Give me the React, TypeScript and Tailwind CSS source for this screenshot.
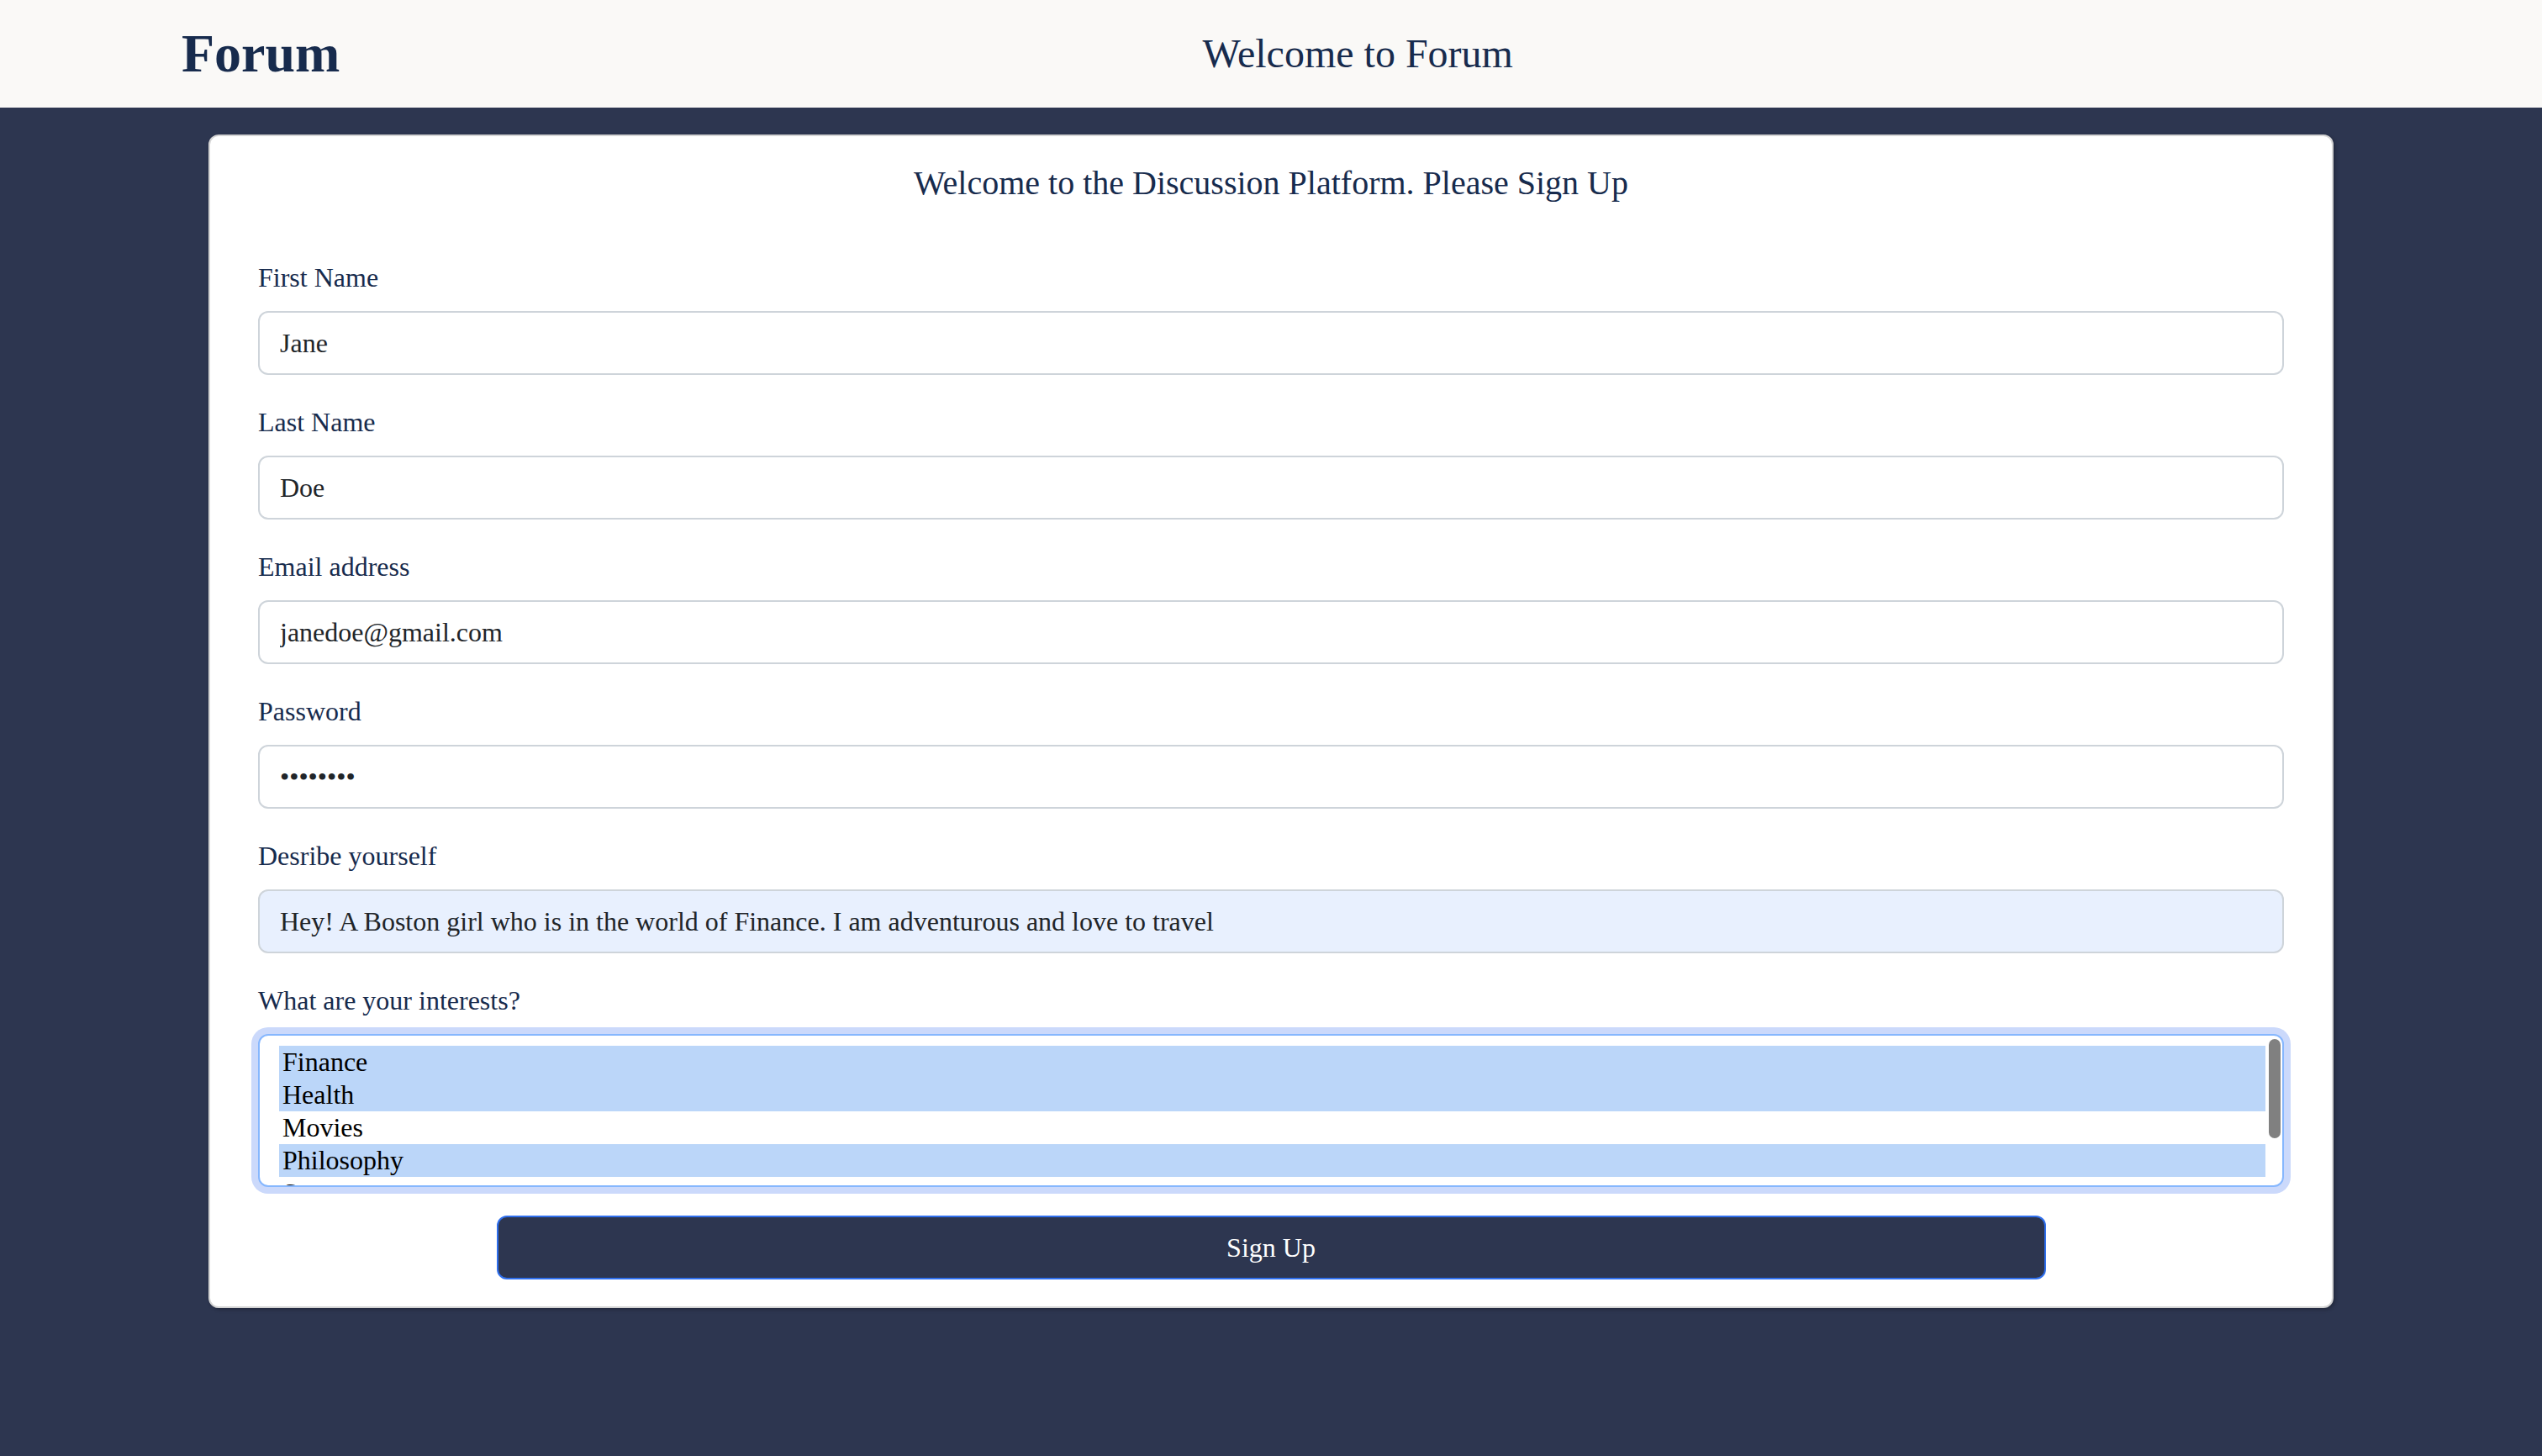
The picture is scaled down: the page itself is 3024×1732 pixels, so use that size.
import React from 'react';

const serif = { fontFamily: '"Liberation Serif", "Times New Roman", serif' };

const fields = [
  { label: 'First Name', value: 'Jane', type: 'text' },
  { label: 'Last Name', value: 'Doe', type: 'text' },
  { label: 'Email address', value: 'janedoe@gmail.com', type: 'email' },
  { label: 'Password', value: 'password', type: 'password' },
];

const interests = [
  { name: 'Finance', selected: true },
  { name: 'Health', selected: true },
  { name: 'Movies', selected: false },
  { name: 'Philosophy', selected: true },
  { name: 'Sports', selected: false },
  { name: 'Technology', selected: false },
];

function Field({ label, value, type, autofilled }: { label: string; value: string; type: string; autofilled?: boolean }) {
  return (
    <div className="mb-[32px]">
      <label className="block text-[32px] leading-[48px] text-[#172b4d] mb-[16px]">{label}</label>
      <input
        type={type}
        readOnly
        value={value}
        style={serif}
        className={`block w-full h-[76px] px-[24px] text-[32px] text-[#212529] border-2 border-[#ced4da] rounded-[12px] outline-none ${
          autofilled ? 'bg-[#e8f0fe]' : 'bg-white'
        }`}
      />
    </div>
  );
}

export default function App() {
  return (
    <div className="min-h-[1732px] bg-[#2d3650]" style={serif}>
      {/* Header */}
      <header className="h-[128px] bg-[#faf9f7]">
        <div className="flex items-center h-full pl-[216px] pr-[216px]">
          <span className="text-[64px] font-bold text-[#172b4d] mr-[18px] leading-none">Forum</span>
          <h1 className="flex-1 text-center text-[48px] text-[#172b4d] leading-none">Welcome to Forum</h1>
        </div>
      </header>

      {/* Sign up card */}
      <main className="pt-[32px]">
        <div className="mx-[248px] bg-white border-2 border-[#d4d4d4] rounded-[12px] shadow-[2px_2px_4px_rgba(0,0,0,0.25)] px-[57px] pt-[32px] pb-[32px]">
          <h2 className="text-center text-[40px] leading-[48px] text-[#172b4d]">
            Welcome to the Discussion Platform. Please Sign Up
          </h2>

          <form className="mt-[64px]">
            {fields.map((f) => (
              <Field key={f.label} label={f.label} value={f.value} type={f.type} />
            ))}
            <Field
              label="Desribe yourself"
              value="Hey! A Boston girl who is in the world of Finance. I am adventurous and love to travel"
              type="text"
              autofilled
            />

            <div>
              <label className="block text-[32px] leading-[48px] text-[#172b4d] mb-[16px]">What are your interests?</label>
              <div className="h-[182px] border-2 border-[#86b7fe] rounded-[12px] shadow-[0_0_0_8px_#cbd9fb] bg-white flex overflow-hidden">
                <div className="flex-1 pl-[23px] pt-[12px] overflow-hidden">
                  {interests.map((i) => (
                    <div
                      key={i.name}
                      className={`h-[39px] leading-[39px] px-[4px] text-[32px] text-black ${i.selected ? 'bg-[#bbd6f9]' : ''}`}
                    >
                      {i.name}
                    </div>
                  ))}
                </div>
                <div className="w-[20px] pl-[4px] pr-[2px] pt-[4px]">
                  <div className="h-[118px] w-[14px] rounded-full bg-[#808080]" />
                </div>
              </div>
            </div>

            <div className="mt-[34px] flex justify-center">
              <button
                type="button"
                style={serif}
                className="w-[1843px] h-[76px] bg-[#2d3650] border-2 border-[#2f6fed] rounded-[12px] text-white text-[32px]"
              >
                Sign Up
              </button>
            </div>
          </form>
        </div>
      </main>
    </div>
  );
}
